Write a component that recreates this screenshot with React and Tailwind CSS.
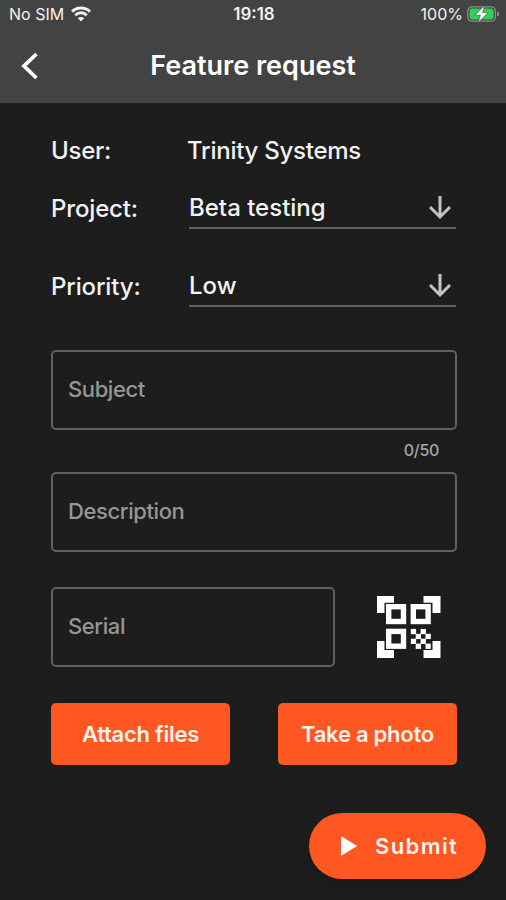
import React from "react";

function WifiIcon() {
    return (
        <svg className="ml-[7px] h-[16px] w-[20px]" viewBox="0 0 20 16" fill="none" stroke="#f2f2f2" strokeWidth="3">
            <path d="M1 5.6a12.8 12.8 0 0 1 18 0" />
            <path d="M4.3 9.2a8.1 8.1 0 0 1 11.4 0" />
            <path d="M10 15.5 6.9 12.3a4.4 4.4 0 0 1 6.2 0Z" fill="#f2f2f2" stroke="none" />
        </svg>
    );
}

function BatteryIcon() {
    return (
        <svg className="ml-[4px] h-[18px] w-[33px]" viewBox="0 0 33 18">
            <rect x="0.8" y="1.8" width="27.6" height="14.4" rx="4" fill="none" stroke="#8e8e8e" strokeWidth="1.2" />
            <rect x="2.6" y="3.6" width="24" height="10.8" rx="2.4" fill="#30d158" />
            <path d="M30 6.5c1.6.4 2.3 1.4 2.3 2.5s-.7 2.1-2.3 2.5Z" fill="#8e8e8e" />
            <path d="M17.8 0.6 7.8 10.2h5.6L11.2 17.4l10-9.8h-5.6Z" fill="#fff" stroke="#434343" strokeWidth="0.6" />
        </svg>
    );
}

function ArrowDown() {
    return (
        <svg className="mr-[5px] h-[24px] w-[22px]" viewBox="0 0 22 24" fill="none" stroke="#c4c4c4" strokeWidth="3">
            <path d="M11 0v21M1 11l10 10 10-10" />
        </svg>
    );
}

function QrIcon() {
    const finders = [[9, 9], [33.6, 9], [9, 33.7]];
    const corners = [[0, 1], [46.5, 1], [0, 46], [46.5, 46]];
    const dots = [[0, 0], [2, 0], [1, 1], [3, 1], [0, 2], [2, 2], [1, 3], [3, 3]];

    return (
        <svg className="h-[64px] w-[64px]" viewBox="0 0 64 64">
            {corners.map(([x, y]) => (
                <rect key={`${x}-${y}`} x={x} y={y} width="17" height="17" fill="#fff" />
            ))}
            <path d="M7.5 7.8h48v47.2h-48z" fill="#1d1d1d" />
            {finders.map(([x, y]) => (
                <rect key={`${x}-${y}`} x={x + 2.7} y={y + 2.7} width="14.8" height="14.8" fill="none" stroke="#fff" strokeWidth="5.4" />
            ))}
            {dots.map(([x, y]) => (
                <rect key={`${x}-${y}`} x={33.8 + x * 4.9} y={33.9 + y * 4.9} width="5.3" height="5.3" fill="#fff" />
            ))}
        </svg>
    );
}

function SelectRow({ label, value }) {
    return (
        <div className="flex h-[42px]">
            <div className="w-[138px] pt-[7px] text-[24px] leading-[30px] tracking-[-0.15px]">{label}</div>
            <div className="flex flex-1 items-center justify-between border-b-2 border-[#5f5f5f] pt-[2px]">
                <span className="text-[24px] leading-[30px]">{value}</span>
                <ArrowDown />
            </div>
        </div>
    );
}

function Field({ label }) {
    return (
        <div className="flex h-[80px] w-full items-center rounded-[5px] border-2 border-[#606060] px-[15px] pb-[1px] text-[22px] tracking-[-0.4px] text-[#969696]">
            {label}
        </div>
    );
}

function App() {
    return (
        <div className="flex h-[900px] w-[506px] flex-col overflow-hidden bg-[#1d1d1d] font-['Inter',sans-serif] font-medium text-[#f2f2f2]">
            <header className="h-[103px] bg-[#434343]">
                <div className="grid h-[29px] grid-cols-3 items-center pl-[9px] pr-[6px] text-[16px]">
                    <div className="flex items-center pb-[2px] font-normal">No SIM<WifiIcon /></div>
                    <div className="pr-[1px] text-center text-[17px] font-semibold">19:18</div>
                    <div className="flex items-center justify-end pb-[2px] font-normal">100%<BatteryIcon /></div>
                </div>
                <div className="flex h-[74px] items-center px-[21px]">
                    <svg className="h-[28px] w-[18px]" viewBox="0 0 18 28" fill="none" stroke="#fff" strokeWidth="3.8">
                        <path d="M15.5 2 3 14l12.5 12" />
                    </svg>
                    <h1 className="flex-1 pr-[18px] text-center text-[27px] font-semibold text-white">Feature request</h1>
                </div>
            </header>

            <main className="flex flex-1 flex-col pl-[51px] pr-[50px] pt-[33px]">
                <div className="flex h-[30px] text-[24px] leading-[30px] tracking-[-0.25px]">
                    <div className="w-[136px]">User:</div>
                    <div>Trinity Systems</div>
                </div>
                <div className="mt-[21px] flex flex-col gap-[36px]">
                    <SelectRow label="Project:" value="Beta testing" />
                    <SelectRow label="Priority:" value="Low" />
                </div>

                <div className="-mr-[1px] mt-[43px]">
                    <Field label="Subject" />
                    <div className="h-[42px] pr-[18px] text-right text-[16px] leading-[41px] tracking-[-0.3px] text-[#a6a6a6]">0/50</div>
                    <Field label="Description" />
                </div>
                <div className="mt-[35px] flex items-center">
                    <div className="w-[284px]"><Field label="Serial" /></div>
                    <div className="ml-[42px]"><QrIcon /></div>
                </div>

                <div className="-mr-[1px] mt-[36px] flex justify-between text-[22px] font-semibold tracking-[-0.25px] text-[#fff3ee]">
                    <button className="h-[62px] w-[179px] rounded-[5px] bg-[#ff5722]">Attach files</button>
                    <button className="h-[62px] w-[179px] rounded-[5px] bg-[#ff5722]">Take a photo</button>
                </div>
                <button className="-mr-[30px] mt-[48px] flex h-[66px] w-[177px] items-center self-end rounded-full bg-[#ff5722] pl-[32px] text-[22px] font-semibold tracking-[1.4px] text-[#fff3ee] shadow-lg">
                    <svg className="mr-[18px] h-[20px] w-[16px]" viewBox="0 0 16 20">
                        <path d="M0 0v20l16-10z" fill="#fff" />
                    </svg>
                    Submit
                </button>
            </main>
        </div>
    );
}

export default App;
